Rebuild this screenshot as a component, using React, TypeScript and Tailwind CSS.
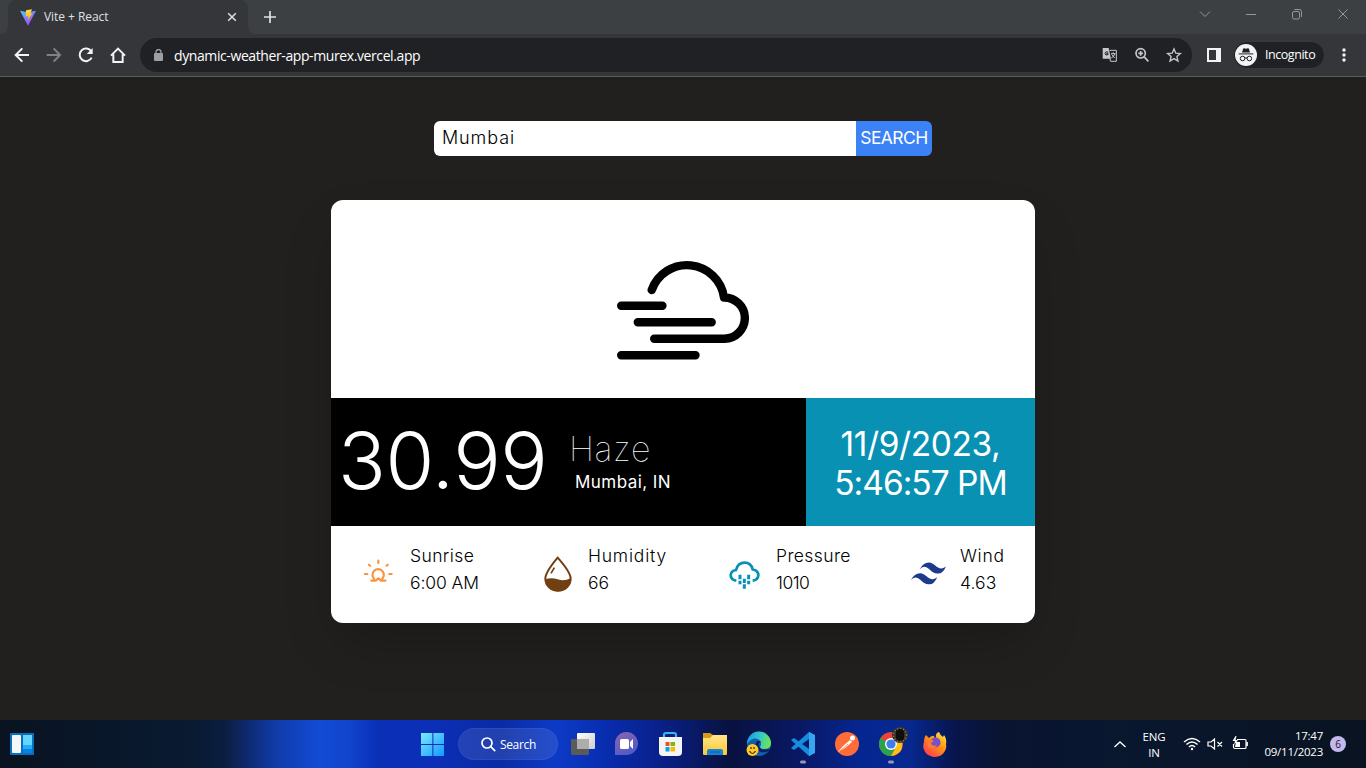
import React from "react";

const ui = "font-['Open_Sans','Noto_Sans',sans-serif]";

function BrowserTop() {
  return (
    <header className={`${ui} flex h-[77px] flex-col border-b border-[#5b5c5f] bg-[#35363a]`}>
      <div className="flex h-[34px] bg-[#3c4043]">
        <div className="flex w-2 bg-[#35363a]"><div className="h-full w-2 rounded-br-lg bg-[#3c4043]" /></div>
        <div className="flex w-[240px] items-center rounded-t-lg bg-[#35363a] pl-3 pr-[10px]">
          <svg width="16" height="17" viewBox="60 26 48 50" className="shrink-0">
            <defs>
              <linearGradient id="vite" x1="0" y1="0" x2="0.7" y2="1"><stop stopColor="#41d1ff" /><stop offset="1" stopColor="#bd34fe" /></linearGradient>
              <linearGradient id="bolt" x1="0" y1="0" x2="0" y2="1"><stop stopColor="#ffe34d" /><stop offset="1" stopColor="#ffa800" /></linearGradient>
            </defs>
            <path d="M60 31 84 35 108 31 84 76Z" fill="url(#vite)" />
            <path d="M78 29 96 26 91 39 97 38 84 60 85 47 77 48Z" fill="url(#bolt)" />
          </svg>
          <span className="ml-2 flex-1 text-[12px] tracking-[-0.05px] text-[#dfe1e5]">Vite + React</span>
          <svg width="12" height="12" viewBox="0 0 12 12" stroke="#dfe1e5" strokeWidth="1.500"><path d="m2.200 2.200 7.600 7.600m0-7.600L2.200 9.800" /></svg>
        </div>
        <div className="w-2 bg-[#35363a]"><div className="h-full w-2 rounded-bl-lg bg-[#3c4043]" /></div>
        <svg width="14" height="14" viewBox="0 0 14 14" className="ml-[7px] mt-[10px]" stroke="#dfe1e5" strokeWidth="1.700"><path d="M7 1v12M1 7h12" /></svg>
        <svg width="154" height="18" viewBox="1197 5 154 18" className="ml-auto mr-[15px] mt-[5px]" fill="none" stroke="#94979a" strokeWidth="1">
          <path d="m1200 11.500 5 5 5-5M1246 14.500h10M1338.500 9.500l9 9m0-9-9 9" />
          <rect x="1292.500" y="11.500" width="7" height="7.500" rx="1.500" />
          <path d="M1294.500 9.500h5q2 0 2 2v5.500" />
        </svg>
      </div>
      <div className="flex h-[42px] items-center pl-[14px] pr-[17px]">
        <svg width="113" height="18" viewBox="42 138 339 54" fill="none" stroke="#f1f3f4" strokeWidth="6">
          <path d="M87 165H48M67 145 47 165 67 185" />
          <path d="M140 165h39M161 145l19 20-19 20" stroke="#7f8186" />
          <path d="M274 154A19 19 0 1 0 275 173" />
          <path d="M278 144v18h-18Z" fill="#f1f3f4" stroke="none" />
          <path d="M333 167 354 146 375 167M340 163v23h28v-23" />
        </svg>
        <div className="ml-[13px] flex h-[34px] w-[1052px] items-center rounded-full bg-[#202124] pl-[14px] pr-[10px]">
          <svg width="9" height="12" viewBox="0 0 9 12"><rect y="4" width="9" height="8" rx="1" fill="#9aa0a6" /><path d="M2 5V3a2.500 2.500 0 0 1 5 0v2" fill="none" stroke="#9aa0a6" strokeWidth="1.300" /></svg>
          <span className="ml-[11px] flex-1 text-[14px] tracking-[-0.4px] text-white">dynamic-weather-app-murex.vercel.app</span>
          <svg width="80" height="18" viewBox="66 138 240 54" fill="none" stroke="#c4c7cb" strokeWidth="5">
            <path d="M68 144h18l7 32H68Z" fill="#c4c7cb" stroke="none" />
            <path d="M89 151h20v33H92l-3-9" strokeWidth="3" />
            <path d="M85 157q-8-5-10 3 1 8 9 4v-3h-5" stroke="#202124" strokeWidth="3" />
            <path d="M93 161h14M100 157v4M94 174q9-5 10-12M95 163l9 11" strokeWidth="3" />
            <circle cx="182" cy="160" r="14" /><path d="m192 170 13 14M175 160h14M182 153v14" />
            <path d="m282 147 5.500 12.500 13.500 1.200-10.200 9 3 13.300L282 176l-11.800 7 3-13.300-10.200-9 13.500-1.200Z" strokeWidth="4.200" />
          </svg>
        </div>
        <svg width="14" height="14" viewBox="0 0 14 14" className="ml-[15px]"><path fillRule="evenodd" d="M0 0h14v14H0ZM2 2v10h7V2Z" fill="#f1f3f4" /></svg>
        <div className="ml-3 flex h-[28px] w-[92px] items-center rounded-full border border-[#38393d] bg-[#202124] pl-px">
          <svg width="22" height="22" viewBox="0 0 22 22"><circle cx="11" cy="11" r="11" fill="#f1f3f4" /><path d="M7 8.500 8.200 4.500Q9 4 11 4.700 13 4 13.800 4.500L15 8.500Z" fill="#202124" /><path d="M3.700 9.900h14.600" stroke="#202124" strokeWidth="1" /><g fill="none" stroke="#202124" strokeWidth="1"><circle cx="7.600" cy="14.500" r="2.300" /><circle cx="14.400" cy="14.500" r="2.300" /><path d="M9.800 14.200q1.200-.8 2.400 0" /></g></svg>
          <span className="ml-2 text-[12.500px] tracking-[-0.45px] text-white">Incognito</span>
        </div>
        <svg width="4" height="14" viewBox="0 0 4 14" fill="#f1f3f4" className="ml-auto mr-[3px]"><circle cx="2" cy="2" r="1.700" /><circle cx="2" cy="7" r="1.700" /><circle cx="2" cy="12" r="1.700" /></svg>
      </div>
    </header>
  );
}

function HazeIcon() {
  return (
    <svg width="132" height="100" viewBox="617 260 132 100" fill="none" stroke="#000" strokeWidth="8.400" strokeLinecap="round" strokeLinejoin="round" className="mt-[60px]">
      <path d="M651.700 290A37.400 37.400 0 0 1 724 297.500A20.500 20.500 0 0 1 724.500 338.700H654.200M621.200 305.800H662.400M637.800 322.300H711.700M621.200 355.300H695.500" />
    </svg>
  );
}

function Weather() {
  return (
    <main className="flex h-[643px] flex-col items-center bg-[#21201e] pt-11 font-['Inter','Liberation_Sans',sans-serif] text-black">
      <div className="flex h-[35px] w-[498px] overflow-hidden rounded-md">
        <div className="flex flex-1 items-center bg-white pb-[2px] pl-2 text-[18px] font-light tracking-[0.9px]">Mumbai</div>
        <button className="w-[76px] whitespace-nowrap bg-[#3b82f6] text-[17.500px] tracking-[-0.55px] text-white">SEARCH</button>
      </div>
      <section className="mt-11 flex h-[423px] w-[704px] flex-col overflow-hidden rounded-xl bg-white shadow-2xl">
        <div className="flex h-[198px] justify-center"><HazeIcon /></div>
        <div className="flex h-32 text-white">
          <div className="flex w-[475px] bg-black">
            <div className="ml-[7px] mt-[22px] w-[209px] whitespace-nowrap text-[79px] font-light leading-[80px] tracking-[-0.4px]">30.99</div>
            <div className="ml-[22px] mt-[33px] whitespace-nowrap">
              <div className="text-[34px] font-thin leading-9 tracking-[0.6px]">Haze</div>
              <div className="ml-[6px] mt-[3px] text-[17px] leading-6 tracking-[0.45px]">Mumbai, IN</div>
            </div>
          </div>
          <div className="flex flex-1 flex-col items-center justify-center whitespace-nowrap bg-[#0891b2] pt-1 text-[33.500px] leading-[39px]">
            <div className="tracking-[-0.4px]">11/9/2023,</div>
            <div className="tracking-[-1px]">5:46:57 PM</div>
          </div>
        </div>
        <div className="flex flex-1 items-start pl-[33px] pt-[17px] text-[17.500px] font-light leading-[27px]">
          <svg width="29" height="24" viewBox="100 88 87 72" className="mt-[16px]" fill="none" stroke="#fb923c" strokeWidth="6.500" strokeLinecap="round">
            <path d="M130 147a17 17 0 1 1 25 0M122 153h13l8-7 8 7h13M103 133h7M176 133h7M143 93v7M115 105l3 3M171 105l-3 3" />
          </svg>
          <div className="-mt-px ml-[17px] w-[134px] whitespace-nowrap"><div className="tracking-[0.4px]">Sunrise</div><div className="tracking-[-0.1px]">6:00 AM</div></div>
          <svg width="28" height="36" viewBox="638 78 84 108" className="mt-[13px]">
            <path d="M679 83Q642 127 642 146a38 36 0 0 0 76 0Q718 127 679 83Z" fill="none" stroke="#713f12" strokeWidth="6" />
            <path d="M642 148q18-7 37 0t39-3a38 37 0 0 1-76 3" fill="#713f12" />
            <path d="m659 130 10-17" stroke="#713f12" strokeWidth="5" />
          </svg>
          <div className="-mt-px ml-4 w-[141px] whitespace-nowrap"><div className="tracking-[0.8px]">Humidity</div><div>66</div></div>
          <svg width="31" height="28" viewBox="118 94 93 84" className="mt-[18px]" fill="none" stroke="#0891b2">
            <path d="M140 153q-16-2-17-16 1-14 16-16 6-22 26-22 19 0 24 20 17 3 17 18-1 14-17 16" strokeWidth="8" />
            <path d="M151 135v14m0 4v11M164 147v13m0 4v13M177 135v14m0 4v11" strokeWidth="9" />
          </svg>
          <div className="-mt-px ml-4 w-[135px] whitespace-nowrap"><div className="tracking-[0.4px]">Pressure</div><div className="tracking-[-0.5px]">1010</div></div>
          <svg width="35" height="23" viewBox="664 97 104 68" className="mt-[19px]" fill="#1e3a8a">
            <path d="M690 118Q700 98 717 98C733 98 741 117 755 116Q762 115 768 110 758 133 742 131C725 131 717 112 705 111Q697 111 690 118Z" />
            <path d="M664 150Q674 130 691 130C707 130 715 149 729 148Q736 147 742 142 732 165 716 163C699 163 691 144 679 143Q671 143 664 150Z" />
          </svg>
          <div className="-mt-px ml-[14px] whitespace-nowrap"><div className="tracking-[0.7px]">Wind</div><div className="tracking-[0.1px]">4.63</div></div>
        </div>
      </section>
    </main>
  );
}

function DockIcons() {
  return (
    <svg width="402" height="48" viewBox="0 0 402 48" className="ml-[2px]">
      <defs>
        <linearGradient id="sq" x2="1" y2="1"><stop stopColor="#fff" /><stop offset="1" stopColor="#ccc" /></linearGradient>
        <linearGradient id="chat" x2="0.6" y2="1"><stop stopColor="#8e65aa" /><stop offset="1" stopColor="#5059c9" /></linearGradient>
        <linearGradient id="folder" x2="0" y2="1"><stop stopColor="#ffe68a" /><stop offset="1" stopColor="#ffc533" /></linearGradient>
        <linearGradient id="edge" x2="1" y2="0.2"><stop stopColor="#1598e0" /><stop offset="0.55" stopColor="#32c4d0" /><stop offset="1" stopColor="#66e45b" /></linearGradient>
        <linearGradient id="fox" x1="1" y1="0" x2="0.2" y2="1"><stop stopColor="#fff44f" /><stop offset="0.45" stopColor="#ff980e" /><stop offset="1" stopColor="#ff3556" /></linearGradient>
      </defs>
      <g>
        <rect x="17" y="13" width="18" height="16" rx="1" fill="url(#sq)" />
        <rect x="11" y="19" width="18" height="16" rx="1" fill="#5a5a5a" />
        <path d="M17 19h12v10H17Z" fill="#adadad" />
      </g>
      <g><path d="M55 35V24a11.500 11.500 0 1 1 11.500 11Z" fill="url(#chat)" /><rect x="60" y="19" width="9" height="10" rx="1.500" fill="#fff" /><path d="m70 22 3-3v10l-3-3Z" fill="#fff" /></g>
      <g><path d="M104 18v-3q0-2 2-2h8q2 0 2 2v3" fill="none" stroke="#31b9ef" strokeWidth="2.200" /><path d="M99 17h23v15q0 4-4 4h-15q-4 0-4-4Z" fill="#f5f5f5" /><path d="M105.500 22h4v4h-4Z" fill="#f25022" /><path d="M110.500 22h4.500v4h-4.500Z" fill="#7fba00" /><path d="M105.500 27h4v4.500h-4Z" fill="#00a4ef" /><path d="M110.500 27h4.500v4.500h-4.500Z" fill="#ffb900" /></g>
      <g><path d="M143 13h7l3 2v5h-10Z" fill="#d99a16" /><path d="M143 18h7l3-3h14v19q0 1-1 1h-22q-1 0-1-1Z" fill="url(#folder)" /><path d="M147 35v-4q0-2 2-2h12q2 0 2 2v4Z" fill="#1683d4" /><path d="M150 32h10" stroke="#0c5e9e" /></g>
      <g><circle cx="199" cy="24" r="12" fill="#0f5fae" /><path d="M187 24a12 12 0 0 1 24-1q0 6-7 6-4 0-4-2 3-5-2-8-6-2-11 5Z" fill="url(#edge)" /><path d="M197 21q-5 8 4 11 4 1 8-1 2-1-1-2-7 2-9-3-1-3 2-5Z" fill="#101c66" /><circle cx="192.500" cy="30" r="6" fill="#ffc928" /><path d="M189.500 31q3 5 6 0M191 27v2m3-2v2" stroke="#332500" strokeWidth="1.200" fill="none" /></g>
      <g><path d="m249 12 5 3v18l-5 3-18-16 3-2 15 11V19l-15 11-3-2Z" fill="#168cdd" /><path d="m249 12 6 3v18l-6 3Z" fill="#36a6ef" /><rect x="240" y="40.500" width="6" height="3" rx="1.500" fill="#9299b7" /></g>
      <g><circle cx="287" cy="24" r="12" fill="#ff6c37" /><circle cx="292.500" cy="18" r="2.500" fill="#fff" /><path d="m290 20 2 2-7 6-7 4 5-6Z" fill="#fff" /><path d="m280 31 8-7" stroke="#ff6c37" strokeWidth=".7" /></g>
      <g><circle cx="331" cy="24" r="12" fill="#ea4335" /><path d="M331 24 320.600 18A12 12 0 0 0 331 36l5-9Z" fill="#2ba24c" /><path d="M331 24h11q1 7-5 10-3 2-6 2l5-9Z" fill="#fbc116" /><path d="M331 18h10.500q2 6-.8 10.500L336 27Z" fill="#fbc116" /><circle cx="331" cy="24" r="6" fill="#fff" /><circle cx="331" cy="24" r="4.600" fill="#3e7df0" /><circle cx="340" cy="15" r="8" fill="#3b3329" /><circle cx="340" cy="15" r="6.500" fill="none" stroke="#91805b" strokeDasharray="1 2" strokeWidth="1.500" /><path d="M336 11q4-4 8 0v8q-4 4-8 0Z" fill="#0d0e10" /><rect x="328" y="40.500" width="6" height="3" rx="1.500" fill="#9299b7" /></g>
      <g><path d="M366 15l3 3q3-3 5-2 0 2 2 2-1-5 3-6 1 3 4 5l1-2q3 4 2 9A11.500 11 0 1 1 364 22q0-5 2-7Z" fill="url(#fox)" /><circle cx="375.500" cy="22.500" r="5" fill="#7651c9" /><path d="M367 22q4-3 7-1l-3 2q1 4 6 2-3 6-9 2Z" fill="#ff7a36" /></g>
    </svg>
  );
}

function Taskbar() {
  return (
    <footer className={`${ui} flex h-12 items-center bg-[linear-gradient(90deg,#091321_0px,#091a31_190px,#0b1d40_225px,#103ba8_275px,#134bd5_320px,#1145ce_348px,#0a30b6_378px,#0b2fb7_430px,#0a2ba6_500px,#0c3bc6_555px,#082db0_605px,#091f85_665px,#08123f_730px,#091864_800px,#052691_860px,#06288f_910px,#08154d_955px,#091431_1000px,#09172f_1120px,#091321_1366px)] text-white`}>
      <svg width="24" height="24" viewBox="0 0 24 24" className="ml-[10px]"><rect y="1" width="24" height="22" rx="1" fill="#0870bd" /><rect x="2" y="3" width="9" height="18" rx="1" fill="#f6f6f6" /><path d="M13 3h9v10h-9Z" fill="#65d7ff" /><path d="M13 13h9v4h-9Z" fill="#24abfc" /><path d="M13 17h9v4h-9Z" fill="#0783e3" /></svg>
      <svg width="24" height="24" viewBox="0 0 24 24" className="ml-[387px]"><defs><linearGradient id="win" x2="1" y2="1"><stop stopColor="#7ce9ff" /><stop offset="1" stopColor="#1299ff" /></linearGradient></defs><path d="M0 1h11.400v11H0Zm12.400 0H23v11H12.400ZM0 13h11.400v11H0Zm12.400 0H23v11H12.400Z" fill="url(#win)" /></svg>
      <div className="ml-[13px] flex h-8 w-[100px] items-center rounded-full border border-white/5 bg-white/10 pl-[22px]">
        <svg width="15" height="15" viewBox="0 0 15 15" fill="none" stroke="white" strokeWidth="1.700"><circle cx="6" cy="6" r="5" /><path d="m9.700 9.700 4.500 4.500" /></svg>
        <span className="ml-1 mt-[2px] text-[12px] tracking-[-0.35px]">Search</span>
      </div>
      <DockIcons />
      <div className="ml-auto flex h-full items-center">
        <svg width="12" height="7" viewBox="0 0 12 7" fill="none" stroke="white" strokeWidth="1.300"><path d="m.5 6 5.500-5 5.500 5" /></svg>
        <div className="ml-4 mt-px w-6 text-center text-[11.500px] leading-4 tracking-[-0.2px]"><div>ENG</div><div>IN</div></div>
        <svg width="66" height="16" viewBox="1182 736 66 16" className="ml-[16px]" fill="none" stroke="white" strokeWidth="1.200">
          <path d="M1184 742q8-7 16 0M1186.500 744.500q5.500-5 11 0M1189 747q3-3 6 0" strokeWidth="1.500" /><circle cx="1192" cy="749" r="1.200" fill="white" stroke="none" />
          <path d="M1208 742h3l3.500-3v10l-3.500-3h-3ZM1217.500 742l4.500 4.500m0-4.500-4.500 4.500" />
          <path d="M1237 739.500h8q1 0 1 1v7q0 1-1 1h-10q-1.500 0-1.500-1.500v-3M1247.300 742v4" /><path d="M1236 742h4v5h-5Z" fill="white" stroke="none" /><path d="m1235.500 736-3 5h2.500l-1 4 4-5h-2.500l1-4Z" fill="white" stroke="none" />
        </svg>
        <div className="ml-[12px] w-[63px] whitespace-nowrap text-right text-[11.500px] leading-4 tracking-[-0.25px]"><div>17:47</div><div>09/11/2023</div></div>
        <div className="ml-[7px] mr-5 flex h-4 w-4 items-center justify-center rounded-full bg-[#c3b9ed] text-[10px] text-[#181725]">6</div>
      </div>
    </footer>
  );
}

export default function App() {
  return <div className="h-[768px] w-[1366px] overflow-hidden"><BrowserTop /><Weather /><Taskbar /></div>;
}
